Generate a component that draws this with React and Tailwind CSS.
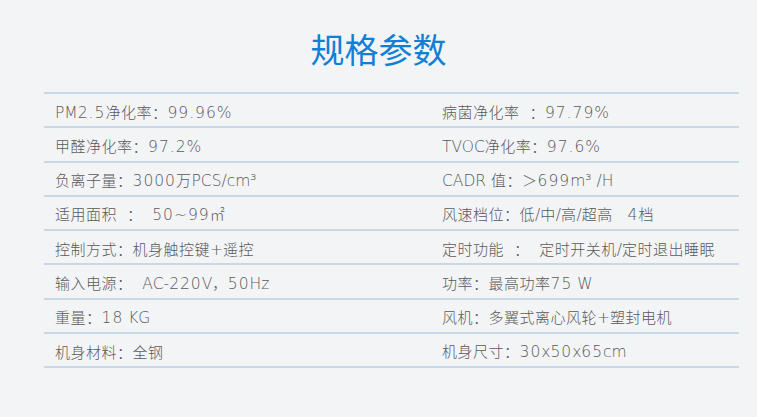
const rows = [
  ["PM2.5净化率：99.96%", "病菌净化率  ：97.79%"],
  ["甲醛净化率：97.2%", "TVOC净化率：97.6%"],
  ["负离子量：3000万PCS/cm³", "CADR 值：＞699m³ /H"],
  ["适用面积  ：  50~99㎡", "风速档位：低/中/高/超高   4档"],
  ["控制方式：机身触控键+遥控", "定时功能  ：  定时开关机/定时退出睡眠"],
  ["输入电源：  AC-220V，50Hz", "功率：最高功率75 W"],
  ["重量：18 KG", "风机：多翼式离心风轮+塑封电机"],
  ["机身材料：全钢", "机身尺寸：30x50x65cm"],
];

const CJK = /[\u3000-\u9fff\uff00-\uffef]/;
const DIGIT = /[0-9.%~]/;

// break a line into CJK / digit / other latin runs so each gets its own font
function runs(text) {
  const out = [];
  for (const ch of text) {
    const kind = CJK.test(ch) ? "cjk" : DIGIT.test(ch) ? "num" : "lat";
    const last = out[out.length - 1];
    if (last && last.kind === kind) last.text += ch;
    else out.push({ kind, text: ch });
  }
  return out;
}

function Cell({ text }) {
  return runs(text).map((r, i) => {
    if (r.kind === "cjk")
      return (
        <span key={i} className="text-[15px] tracking-[0.5px] font-light font-['Noto_Sans_CJK_SC',sans-serif]">
          {r.text}
        </span>
      );
    if (r.kind === "num")
      return (
        <span key={i} className="text-[15.5px] font-extralight tracking-[1px] font-['DejaVu_Sans',sans-serif]">
          {r.text}
        </span>
      );
    return (
      <span key={i} className="text-[15.5px] font-extralight font-['DejaVu_Sans',sans-serif]">
        {r.text}
      </span>
    );
  });
}

export default function App() {
  return (
    <div className="w-[757px] h-[417px] bg-[#f3f4f6] overflow-hidden font-['Noto_Sans_CJK_SC',sans-serif]">
      <h1 className="pt-[29px] h-[92px] text-center text-[34px] leading-[40px] text-[#0f80d6] font-normal">
        规格参数
      </h1>
      <div className="ml-[44px] w-[695px] border-b-2 border-[#c9d7e7]">
        {rows.map(([a, b], i) => (
          <div
            key={i}
            className="flex items-center h-[34.25px] border-t-2 border-[#c9d7e7] pt-[3px] text-[#5a5a5a] whitespace-pre leading-[20px]"
          >
            <div className="w-[398px] pl-[11px]">
              <Cell text={a} />
            </div>
            <div>
              <Cell text={b} />
            </div>
          </div>
        ))}
      </div>
    </div>
  );
}
